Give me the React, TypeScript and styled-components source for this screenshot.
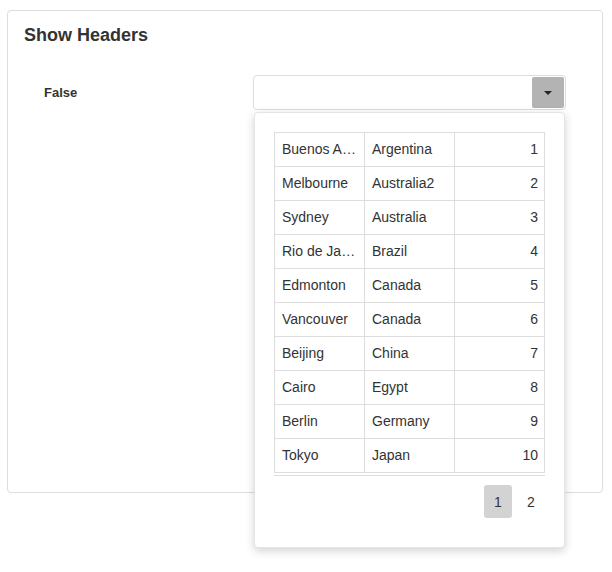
import styled, { createGlobalStyle } from 'styled-components';

const GlobalStyle = createGlobalStyle`
  html, body {
    margin: 0;
    padding: 0;
    background: #fff;
    font-family: "Liberation Sans", Arial, sans-serif;
    color: #333;
  }
`;

const rows: [string, string, number][] = [
  ['Buenos Aires', 'Argentina', 1],
  ['Melbourne', 'Australia2', 2],
  ['Sydney', 'Australia', 3],
  ['Rio de Janeiro', 'Brazil', 4],
  ['Edmonton', 'Canada', 5],
  ['Vancouver', 'Canada', 6],
  ['Beijing', 'China', 7],
  ['Cairo', 'Egypt', 8],
  ['Berlin', 'Germany', 9],
  ['Tokyo', 'Japan', 10],
];

function App() {
  return (
    <>
      <GlobalStyle />
      <Page>
        <Card>
          <Title>Show Headers</Title>
          <FormRow>
            <Label>False</Label>
            <Combo>
              <Input />
              <DropButton>
                <Caret />
              </DropButton>
              <Popup>
                <Grid>
                  <colgroup>
                    <col style={{ width: 90 }} />
                    <col style={{ width: 90 }} />
                    <col />
                  </colgroup>
                  <tbody>
                    {rows.map(([city, country, id]) => (
                      <tr key={id}>
                        <Cell>{city}</Cell>
                        <Cell>{country}</Cell>
                        <Cell $right>{id}</Cell>
                      </tr>
                    ))}
                  </tbody>
                </Grid>
                <Footer />
                <Pager>
                  <PageButton $active>1</PageButton>
                  <PageButton>2</PageButton>
                </Pager>
              </Popup>
            </Combo>
          </FormRow>
        </Card>
      </Page>
    </>
  );
}

// Styled Components
const Page = styled.div`
  min-height: 572px;
  box-sizing: border-box;
  padding: 10px 9px 0 7px;
`;

const Card = styled.div`
  border: 1px solid #ddd;
  border-radius: 4px;
  min-height: 483px;
  box-sizing: border-box;
  padding: 14px 16px 16px;
`;

const Title = styled.h3`
  margin: 0;
  font-size: 18px;
  font-weight: bold;
  line-height: 20px;
  color: #333;
`;

const FormRow = styled.div`
  display: flex;
  align-items: center;
  margin-top: 30px;
  padding-left: 20px;
`;

const Label = styled.div`
  width: 209px;
  font-size: 13px;
  font-weight: bold;
  color: #333;
`;

const Combo = styled.div`
  position: relative;
  width: 313px;
  height: 35px;
  box-sizing: border-box;
  border: 1px solid #ddd;
  border-radius: 4px;
  display: flex;
  align-items: center;
  padding: 1px;
`;

const Input = styled.div`
  flex: 1;
`;

const DropButton = styled.div`
  width: 32px;
  height: 31px;
  background: #b3b3b3;
  border-radius: 2px;
  display: flex;
  align-items: center;
  justify-content: center;
`;

const Caret = styled.span`
  width: 0;
  height: 0;
  border-left: 4px solid transparent;
  border-right: 4px solid transparent;
  border-top: 4px solid #222;
`;

const Popup = styled.div`
  position: absolute;
  top: 36px;
  left: 0;
  right: 0;
  box-sizing: border-box;
  height: 436px;
  background: #fff;
  border: 1px solid #e4e4e4;
  border-radius: 4px;
  box-shadow: 0 3px 10px rgba(0, 0, 0, 0.18);
  padding: 19px 19px;
  z-index: 10;
`;

const Grid = styled.table`
  width: 271px;
  border-collapse: collapse;
  table-layout: fixed;
  font-size: 14px;
  color: #333;
`;

const Cell = styled.td<{ $right?: boolean }>`
  border: 1px solid #ddd;
  height: 32px;
  padding: 0 6px 1px 7px;
  line-height: 16px;
  white-space: nowrap;
  overflow: hidden;
  text-overflow: ellipsis;
  text-align: ${p => (p.$right ? 'right' : 'left')};
`;

const Footer = styled.div`
  width: 271px;
  margin-top: 2px;
  border-top: 1px solid #ddd;
`;

const Pager = styled.div`
  width: 271px;
  display: flex;
  justify-content: flex-end;
  gap: 5px;
  margin-top: 9px;
`;

const PageButton = styled.div<{ $active?: boolean }>`
  width: 28px;
  height: 33px;
  border-radius: 3px;
  display: flex;
  align-items: center;
  justify-content: center;
  font-size: 14px;
  color: #333;
  background: ${p => (p.$active ? '#d3d3d3' : 'transparent')};
`;

export default App;
